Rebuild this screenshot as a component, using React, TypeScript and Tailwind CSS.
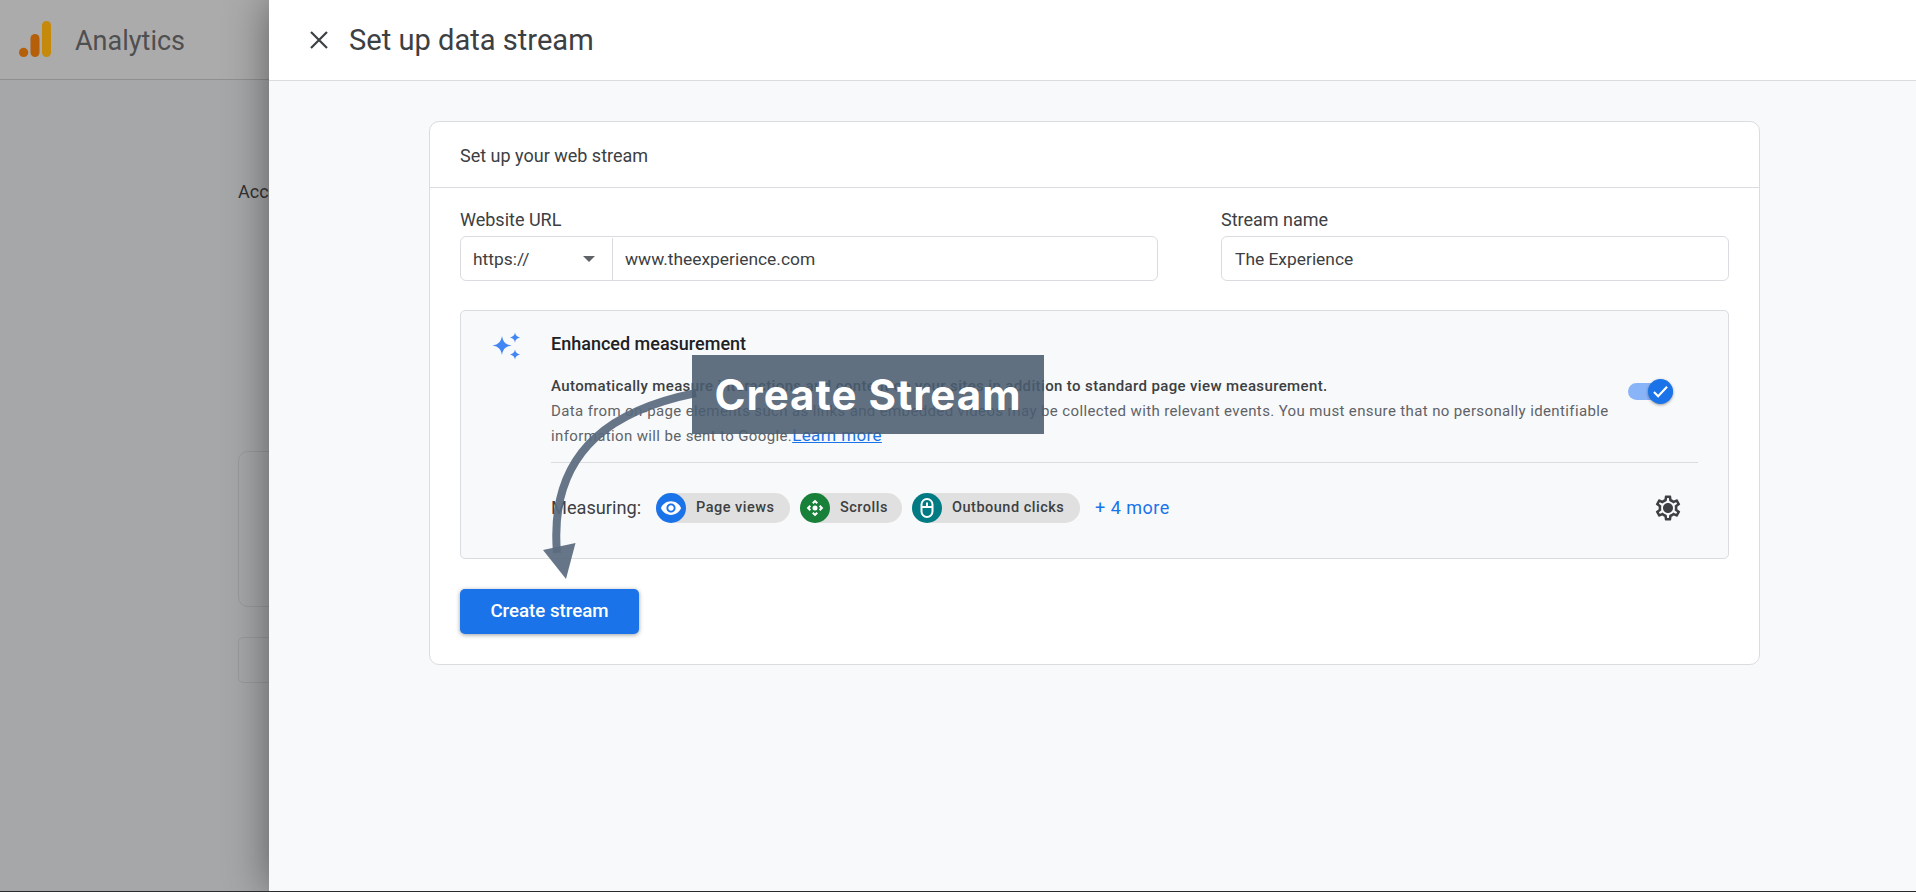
import React from "react";

const chips = [
  { label: "Page views", bg: "bg-[#1a73e8]", width: "w-[134px]", icon: "eye" },
  { label: "Scrolls", bg: "bg-[#188038]", width: "w-[102px]", icon: "scroll" },
  { label: "Outbound clicks", bg: "bg-[#007b83]", width: "w-[168px]", icon: "mouse" },
];

function ChipIcon({ icon }: { icon: string }) {
  if (icon === "eye")
    return (
      <svg viewBox="0 0 24 24" className="h-[22px] w-[22px]" fill="#fff">
        <path d="M12 4.5C7 4.5 2.73 7.61 1 12c1.73 4.39 6 7.5 11 7.5s9.27-3.11 11-7.5c-1.73-4.39-6-7.5-11-7.5zM12 17c-2.76 0-5-2.24-5-5s2.24-5 5-5 5 2.24 5 5-2.24 5-5 5zm0-8c-1.66 0-3 1.34-3 3s1.34 3 3 3 3-1.34 3-3-1.34-3-3-3z" />
      </svg>
    );
  if (icon === "scroll")
    return (
      <svg viewBox="0 0 24 24" className="h-[20px] w-[20px]" fill="#fff">
        <path d="M15.54 5.54L13.77 7.3 12 5.54 10.23 7.3 8.46 5.54 12 2zm2.92 10l-1.76-1.77L18.46 12l-1.76-1.77 1.76-1.77L22 12zm-10 2.92l1.77-1.76L12 18.46l1.77-1.76 1.77 1.76L12 22zm-2.92-10l1.76 1.77L5.54 12l1.76 1.77-1.76 1.77L2 12z" />
        <circle cx="12" cy="12" r="3" />
      </svg>
    );
  return (
    <svg viewBox="0 0 24 24" className="h-[24px] w-[24px]" fill="none" stroke="#fff" strokeWidth="2">
      <rect x="6.5" y="3" width="11" height="18" rx="5.5" />
      <path d="M6.5 11h11M12 6.5v4" />
    </svg>
  );
}

export default function App() {
  return (
    <div className="relative flex h-[892px] w-full flex-col overflow-hidden border-b border-[#2b2b2b] font-['Roboto',sans-serif]">
      <div className="flex min-h-0 flex-1">
        {/* dimmed page behind the drawer */}
        <div className="flex w-[269px] shrink-0 flex-col bg-[#a6a7a9]">
          <div className="flex h-[80px] items-center gap-[23px] border-b border-[#8f9092] bg-[#ababab] pl-[19px]">
            <svg width="33" height="37" viewBox="0 0 33 37">
              <rect x="23" y="0" width="9" height="36" rx="4.5" fill="#c58a0c" />
              <rect x="11.5" y="13" width="9" height="23" rx="4.5" fill="#b65f0a" />
              <circle cx="4.6" cy="31.4" r="4.6" fill="#b65f0a" />
            </svg>
            <span className="pt-[3px] text-[27px] leading-none text-[#4f4f50]">Analytics</span>
          </div>
          <div className="flex flex-col pl-[238px] pt-[100px]">
            <div className="text-[18px] leading-[24px] text-[#333]">Account</div>
            <div className="mt-[247px] h-[156px] w-[400px] rounded-[10px] border border-[#989a9c]" />
            <div className="mt-[30px] h-[46px] w-[400px] rounded-[5px] border border-[#989a9c]" />
          </div>
        </div>

        {/* drawer */}
        <div className="relative z-10 flex min-w-0 flex-1 flex-col bg-[#f8f9fa] shadow-[0_0_40px_rgba(0,0,0,0.45)]">
          <div className="flex h-[81px] shrink-0 items-center gap-[20px] border-b border-[#dadce0] bg-white pl-[40px]">
            <svg width="20" height="20" viewBox="0 0 20 20" fill="none" stroke="#3c4043" strokeWidth="2.2">
              <path d="M2 2l16 16M18 2L2 18" />
            </svg>
            <span className="pt-[2px] text-[29.1px] leading-none text-[#3c4043]">Set up data stream</span>
          </div>

          <div className="pl-[160px] pt-[40px]">
            <div className="w-[1331px] rounded-[10px] border border-[#dadce0] bg-white">
              <div className="flex h-[66px] items-center border-b border-[#dadce0] px-[30px] pt-[2px] text-[18px] text-[#3c4043]">
                Set up your web stream
              </div>
              <div className="px-[30px] pb-[30px] pt-[20px]">
                <div className="flex gap-[63px]">
                  <div className="w-[698px]">
                    <div className="mb-[4px] text-[18px] leading-[24px] text-[#3c4043]">Website URL</div>
                    <div className="flex h-[45px] items-stretch rounded-[6px] border border-[#dadce0] pt-[1px] text-[17.4px] text-[#3c4043]">
                      <div className="flex w-[152px] items-center justify-between border-r border-[#dadce0] pl-[12px] pr-[17px]">
                        <span>https://</span>
                        <span className="h-0 w-0 border-x-[6px] border-t-[6px] border-x-transparent border-t-[#5f6368]" />
                      </div>
                      <div className="flex flex-1 items-center pl-[12px]">www.theexperience.com</div>
                    </div>
                  </div>
                  <div className="flex-1">
                    <div className="mb-[4px] text-[18px] leading-[24px] text-[#3c4043]">Stream name</div>
                    <div className="flex h-[45px] items-center rounded-[6px] border border-[#dadce0] pl-[13px] pt-[1px] text-[17.4px] text-[#3c4043]">
                      The Experience
                    </div>
                  </div>
                </div>

                <div className="mt-[29px] flex h-[249px] rounded-[5px] border border-[#dadce0] bg-[#f8f9fa]">
                  <div className="w-[90px] shrink-0 pl-[31px] pt-[21px]">
                    <svg width="30" height="30" viewBox="0 0 30 30" fill="#4285f4">
                      <path d="M10 4c1 5.800 3.500 8.500 9.500 9.500-6 1-8.500 3.700-9.500 9.500-1-5.800-3.500-8.500-9.500-9.500 6-1 8.500-3.700 9.500-9.500z" />
                      <path d="M23 .5c.6 3 1.800 4.300 5 5-3.200.7-4.400 2-5 5-.6-3-1.800-4.300-5-5 3.200-.7 4.400-2 5-5z" />
                      <path d="M23 17.500c.6 3 1.800 4.300 5 5-3.200.7-4.400 2-5 5-.6-3-1.800-4.300-5-5 3.200-.7 4.400-2 5-5z" />
                    </svg>
                  </div>
                  <div className="min-w-0 flex-1 pr-[30px] pt-[21px]">
                    <div className="text-[18px] font-medium leading-[24px] text-[#202124]">Enhanced measurement</div>
                    <div className="mt-[18px] flex items-start">
                      <div className="w-[1077px] text-[15px] leading-[24.5px] tracking-[0.37px] text-[#5f6368]">
                        <div className="font-medium text-[#3c4043]">
                          Automatically measure interactions and content on your sites in addition to standard page view measurement.
                        </div>
                        Data from on-page elements such as links and embedded videos may be collected with relevant events. You must ensure that no personally identifiable
                        <br />
                        information will be sent to Google.
                        <span className="text-[17px] text-[#1a73e8] underline">Learn more</span>
                      </div>
                      <div className="relative mt-[9px] h-[17px] w-[45px] rounded-full bg-[#8ab4f8]">
                        <div className="absolute -top-[4px] right-0 flex h-[25px] w-[25px] items-center justify-center rounded-full bg-[#1a73e8] shadow-[0_1px_3px_rgba(0,0,0,0.4)]">
                          <svg width="19" height="19" viewBox="0 0 16 16" fill="none" stroke="#fff" strokeWidth="1.8">
                            <path d="M2.500 8.500l3.500 3.500 7.500-8" />
                          </svg>
                        </div>
                      </div>
                    </div>
                    <div className="mt-[13px] border-t border-[#dadce0]" />
                    <div className="mt-[30px] flex h-[30px] items-center">
                      <span className="w-[105px] text-[18.2px] text-[#3c4043]">Measuring:</span>
                      <div className="flex gap-[10px]">
                        {chips.map((c) => (
                          <div key={c.label} className={`flex h-[30px] items-center rounded-full bg-[#e0e0e0] ${c.width}`}>
                            <div className={`flex h-[30px] w-[30px] items-center justify-center rounded-full ${c.bg}`}>
                              <ChipIcon icon={c.icon} />
                            </div>
                            <span className="ml-[10px] whitespace-nowrap text-[14.5px] font-medium tracking-[0.5px] text-[#3c4043]">
                              {c.label}
                            </span>
                          </div>
                        ))}
                      </div>
                      <span className="ml-[15px] text-[18px] tracking-[0.5px] text-[#1a73e8]">+ 4 more</span>
                      <svg viewBox="0 0 24 24" width="30" height="30" fill="#3c4043" className="ml-auto mr-[15px]">
                        <path d="M19.43 12.98c.04-.32.07-.64.07-.98 0-.34-.03-.66-.07-.98l2.11-1.65c.19-.15.24-.42.12-.64l-2-3.46c-.09-.16-.26-.25-.44-.25-.06 0-.12.01-.17.03l-2.49 1c-.52-.4-1.08-.73-1.69-.98l-.38-2.65C14.46 2.18 14.25 2 14 2h-4c-.25 0-.46.18-.49.42l-.38 2.65c-.61.25-1.17.59-1.69.98l-2.49-1c-.06-.02-.12-.03-.18-.03-.17 0-.34.09-.43.25l-2 3.46c-.13.22-.07.49.12.64l2.11 1.65c-.04.32-.07.65-.07.98 0 .33.03.66.07.98l-2.11 1.65c-.19.15-.24.42-.12.64l2 3.46c.09.16.26.25.44.25.06 0 .12-.01.17-.03l2.49-1c.52.4 1.08.73 1.69.98l.38 2.65c.03.24.24.42.49.42h4c.25 0 .46-.18.49-.42l.38-2.65c.61-.25 1.17-.59 1.69-.98l2.49 1c.06.02.12.03.18.03.17 0 .34-.09.43-.25l2-3.46c.12-.22.07-.49-.12-.64l-2.11-1.65zm-1.98-1.71c.04.31.05.52.05.73 0 .21-.02.43-.05.73l-.14 1.13.89.7 1.08.84-.7 1.21-1.27-.51-1.04-.42-.9.68c-.43.32-.84.56-1.25.73l-1.06.43-.16 1.13-.2 1.35h-1.4l-.19-1.35-.16-1.13-1.06-.43c-.43-.18-.83-.41-1.23-.71l-.91-.7-1.06.43-1.27.51-.7-1.21 1.08-.84.89-.7-.14-1.13c-.03-.31-.05-.54-.05-.74s.02-.43.05-.73l.14-1.13-.89-.7-1.08-.84.7-1.21 1.27.51 1.04.42.9-.68c.43-.32.84-.56 1.25-.73l1.06-.43.16-1.13.2-1.35h1.39l.19 1.35.16 1.13 1.06.43c.43.18.83.41 1.23.71l.91.7 1.06-.43 1.27-.51.7 1.21-1.07.85-.89.7.14 1.13zM12 8c-2.21 0-4 1.790-4 4s1.790 4 4 4 4-1.790 4-4-1.790-4-4-4z" />
                      </svg>
                    </div>
                  </div>
                </div>

                <button className="mt-[30px] flex h-[45px] w-[179px] items-center justify-center rounded-[5px] bg-[#1a73e8] text-[18.7px] font-medium text-white shadow-[0_1px_4px_rgba(60,64,67,0.5)]">
                  Create stream
                </button>
              </div>
            </div>
          </div>
        </div>
      </div>

      {/* annotation laid over the page */}
      <svg className="pointer-events-none absolute left-0 top-0 z-20" width="1916" height="892" viewBox="0 0 1916 892">
        <path d="M696 393C622 408 548 444 557 553" fill="none" stroke="#5a6c7f" strokeOpacity="0.93" strokeWidth="8" />
        <path d="M543 550L575.500 543L566 579Z" fill="#5a6c7f" fillOpacity="0.93" />
      </svg>
      <div className="absolute left-[692px] top-[355px] z-20 flex h-[79px] w-[352px] items-center justify-center bg-[#4a5c6f]/[0.88] font-['Inter',sans-serif] text-[42px] font-bold leading-none tracking-[1px] text-white">
        Create Stream
      </div>
    </div>
  );
}
